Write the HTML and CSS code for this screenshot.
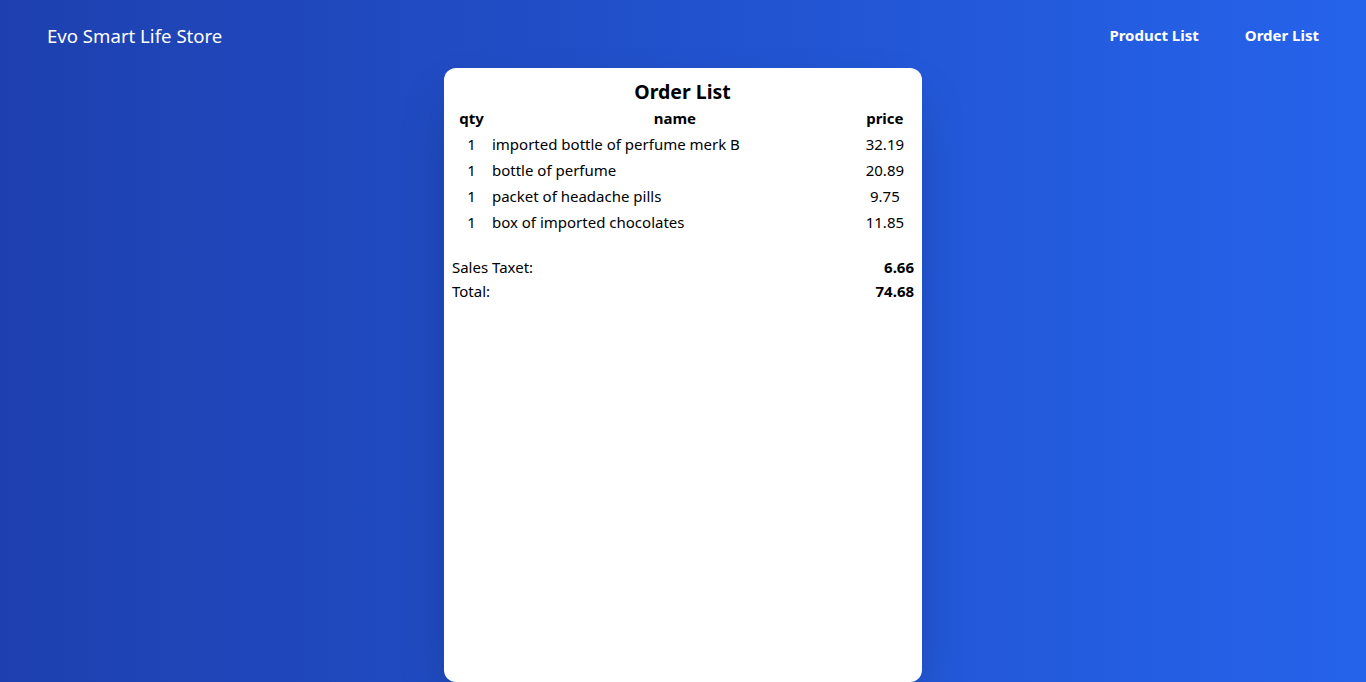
FILE: index.html
```html
<!DOCTYPE html>
<html lang="en">
<head>
<meta charset="utf-8">
<title>Evo Smart Life Store</title>
<link rel="stylesheet" href="styles.css">
</head>
<body>
<div class="app">
  <header class="header">
    <div class="brand">Evo Smart Life Store</div>
    <nav class="nav">
      <a class="nav-link" href="#">Product List</a>
      <a class="nav-link" href="#">Order List</a>
    </nav>
  </header>
  <main class="main">
    <section class="card">
      <h1 class="card-title">Order List</h1>
      <table class="order-table">
        <thead>
          <tr><th class="col-qty">qty</th><th class="col-name">name</th><th class="col-price">price</th></tr>
        </thead>
        <tbody>
          <tr><td class="col-qty">1</td><td class="col-name">imported bottle of perfume merk B</td><td class="col-price">32.19</td></tr>
          <tr><td class="col-qty">1</td><td class="col-name">bottle of perfume</td><td class="col-price">20.89</td></tr>
          <tr><td class="col-qty">1</td><td class="col-name">packet of headache pills</td><td class="col-price">9.75</td></tr>
          <tr><td class="col-qty">1</td><td class="col-name">box of imported chocolates</td><td class="col-price">11.85</td></tr>
        </tbody>
      </table>
      <div class="summary">
        <div class="summary-row"><span>Sales Taxet:</span><strong>6.66</strong></div>
        <div class="summary-row"><span>Total:</span><strong>74.68</strong></div>
      </div>
    </section>
  </main>
</div>
</body>
</html>
```
FILE: styles.css
```css
* { box-sizing: border-box; }
html, body { margin: 0; padding: 0; }
body {
  font-family: "Segoe UI", "Noto Sans", "Open Sans", sans-serif;
  color: #000;
  height: 682px;
  overflow: hidden;
}
.app {
  min-height: 100vh;
  background: linear-gradient(to right, #1e40af, #2563eb);
}
.header {
  display: flex;
  justify-content: space-between;
  align-items: center;
  height: 68px;
  padding: 4px 47px 0 47px;
}
.brand {
  color: #fff;
  font-size: 18.6px;
  line-height: 28px;
}
.nav {
  display: flex;
  gap: 46px;
  margin-bottom: 2px;
}
.nav-link {
  color: #fff;
  font-weight: 700;
  font-size: 15px;
  text-decoration: none;
  line-height: 24px;
}
.main {
  display: flex;
  justify-content: center;
}
.card {
  width: 35%;
  height: 90vh;
  background: #fff;
  border-radius: 12px;
  box-shadow: 0 25px 50px -12px rgba(0,0,0,0.25);
  padding: 10px 8px 8px 7px;
}
.card-title {
  margin: 0;
  text-align: center;
  font-size: 19.5px;
  line-height: 28px;
  font-weight: 700;
}
.order-table {
  border-collapse: collapse;
  width: calc(100% - 10px);
  font-size: 15px;
  margin-top: -1px;
}
.order-table th, .order-table td {
  padding: 0 0 0 8px;
  height: 26px;
  line-height: 26px;
}
.order-table th { font-weight: 700; font-size: 15px; }
.order-table .col-qty { text-align: center; width: 33px; }
.order-table td.col-name { text-align: left; }
.order-table th.col-name { text-align: center; }
.order-table .col-price { text-align: center; width: 45px; }
.summary {
  margin-top: 20px;
  margin-left: 1px;
  font-size: 15px;
}
.summary-row {
  display: flex;
  justify-content: space-between;
  line-height: 24px;
}
.summary-row strong { font-weight: 700; }
```
